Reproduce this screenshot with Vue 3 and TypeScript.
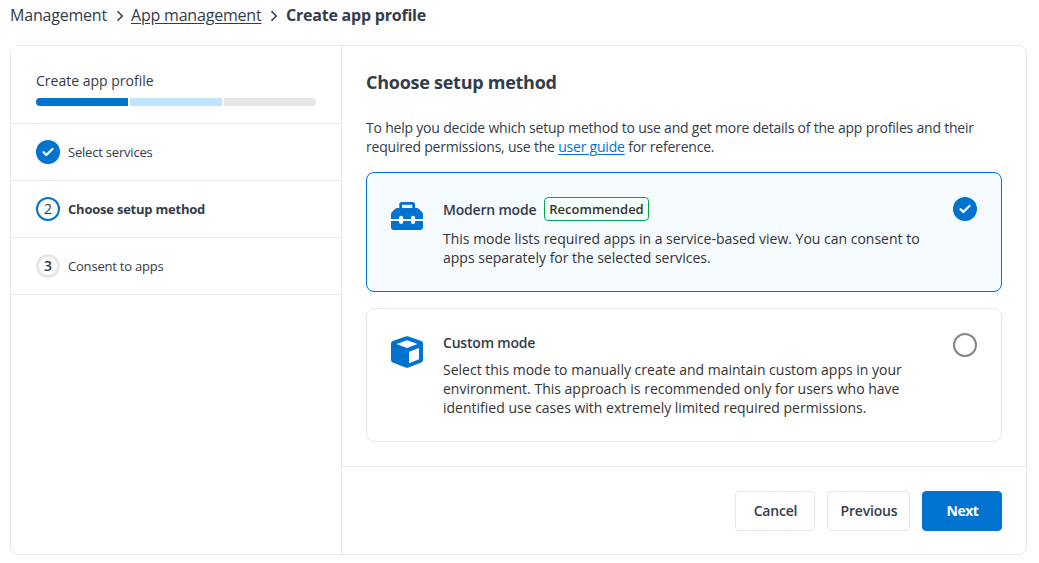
<script setup lang="ts">
import { computed, ref } from 'vue'

type Mode = 'modern' | 'custom'

interface Step {
  id: number
  label: string
}

const steps: Step[] = [
  { id: 1, label: 'Select services' },
  { id: 2, label: 'Choose setup method' },
  { id: 3, label: 'Consent to apps' },
]
const current = ref<number>(2)
const mode = ref<Mode>('modern')

const stepStates = computed(() =>
  steps.map((s) => ({
    ...s,
    state: s.id < current.value ? 'done' : s.id === current.value ? 'active' : 'todo',
  })),
)
</script>

<template>
  <div class="page">
    <nav class="breadcrumb">
      <span class="crumb c1">Management</span>
      <svg class="chev" width="8" height="12" viewBox="0 0 8 12"><path d="M1.500 1.200 6.200 6l-4.700 4.800" /></svg>
      <a class="crumb c2">App management</a>
      <svg class="chev second" width="8" height="12" viewBox="0 0 8 12"><path d="M1.500 1.200 6.200 6l-4.700 4.800" /></svg>
      <span class="crumb current">Create app profile</span>
    </nav>

    <div class="wizard">
      <aside class="sidebar">
        <div class="side-head">
          <div class="side-title">Create app profile</div>
          <div class="progress">
            <span v-for="s in stepStates" :key="s.id" class="segment" :class="s.state"></span>
          </div>
        </div>
        <div v-for="s in stepStates" :key="s.id" class="step" :class="s.state">
          <svg v-if="s.state === 'done'" class="tick" width="24" height="24" viewBox="0 0 24 24">
            <circle cx="12" cy="12" r="12" />
            <path d="m7.600 12.300 2.700 2.700 6.200-6" />
          </svg>
          <span v-else class="bullet">{{ s.id }}</span>
          <span class="step-label">{{ s.label }}</span>
        </div>
      </aside>

      <main class="main">
        <section class="content">
          <h1>Choose setup method</h1>
          <p class="intro">
            To help you decide which setup method to use and get more details of the app profiles and their<br />
            required permissions, use the <a>user guide</a> for reference.
          </p>

          <div class="card modern" :class="{ selected: mode === 'modern' }" @click="mode = 'modern'">
            <svg class="glyph" width="32" height="32" viewBox="0 0 32 32">
              <path
                fill-rule="evenodd"
                d="M8.300 8V4.500Q8.300 2 10.800 2h10.700Q24 2 24 4.500V8h1.500Q27 8 28 9l3 3q1 1 1 2.500V19h-7.800v-1.200a2.100 2.100 0 0 0-4.200 0V19h-7.800v-1.200a2.100 2.100 0 0 0-4.200 0V19H0v-4.500Q0 13 1 12l3-3q1-1 2.500-1zM11 8h10.300V4.700H11z"
              />
              <path d="M0 21h8v1a2.100 2.100 0 0 0 4.200 0v-1H20v1a2.100 2.100 0 0 0 4.200 0v-1H32v6q0 3-3 3H3q-3 0-3-3z" />
            </svg>
            <div class="text">
              <div class="name-row">
                <span class="name">Modern mode</span>
                <span class="tag">Recommended</span>
              </div>
              <p>
                This mode lists required apps in a service-based view. You can consent to<br />
                apps separately for the selected services.
              </p>
            </div>
            <svg v-if="mode === 'modern'" class="tick radio" width="24" height="24" viewBox="0 0 24 24">
              <circle cx="12" cy="12" r="12" />
              <path d="m7.600 12.300 2.700 2.700 6.200-6" />
            </svg>
            <span v-else class="ring radio"></span>
          </div>

          <div class="card custom" :class="{ selected: mode === 'custom' }" @click="mode = 'custom'">
            <svg class="glyph" width="32" height="32" viewBox="0 0 32 32">
              <path
                fill-rule="evenodd"
                d="M14.500.500Q16-.2 17.500.500L30.300 5.100Q32 5.800 32 7.600v16.500q0 1.800-1.700 2.500L17.500 31.500q-1.500.7-3 0L1.700 26.600Q0 25.900 0 24.100V7.600Q0 5.800 1.700 5.100zM5.500 8 16 12 26.500 8 16 4.200zM18 15.800v11.400l10-3.900V11.900z"
              />
            </svg>
            <div class="text">
              <div class="name-row">
                <span class="name">Custom mode</span>
              </div>
              <p>
                Select this mode to manually create and maintain custom apps in your<br />
                environment. This approach is recommended only for users who have<br />
                identified use cases with extremely limited required permissions.
              </p>
            </div>
            <svg v-if="mode === 'custom'" class="tick radio" width="24" height="24" viewBox="0 0 24 24">
              <circle cx="12" cy="12" r="12" />
              <path d="m7.600 12.300 2.700 2.700 6.200-6" />
            </svg>
            <span v-else class="ring radio"></span>
          </div>
        </section>

        <footer class="footer">
          <button class="btn cancel" type="button">Cancel</button>
          <button class="btn previous" type="button">Previous</button>
          <button class="btn primary" type="button">Next</button>
        </footer>
      </main>
    </div>
  </div>
</template>

<style>
body {
  background: #fff;
  overflow: hidden;
}
</style>

<style scoped>
* {
  box-sizing: border-box;
}
.page {
  width: 1039px;
  height: 563px;
  padding: 4px 12px 0 10px;
  font-family: 'Open Sans', 'Noto Sans', sans-serif;
  font-size: 14px;
  color: #333c49;
}
.breadcrumb {
  display: flex;
  align-items: center;
  height: 22px;
  font-size: 16px;
  line-height: 22px;
  white-space: nowrap;
}
.crumb {
  letter-spacing: -0.2px;
}
.chev {
  flex: none;
  margin: 2px 7px 0 9px;
  fill: none;
  stroke: #333c49;
  stroke-width: 1.5;
}
.chev.second {
  margin-right: 7.6px;
}
.c2 {
  text-decoration: underline;
  text-underline-offset: 2px;
}
.current {
  font-weight: 700;
  letter-spacing: -0.22px;
}
.wizard {
  display: flex;
  width: 1017px;
  height: 510px;
  margin-top: 19px;
  border: 1px solid #e6e7e9;
  border-radius: 8px;
}
.sidebar {
  flex: none;
  width: 331px;
  border-right: 1px solid #e6e7e9;
}
.side-head {
  height: 78px;
  padding: 25px 25px 0;
  border-bottom: 1px solid #e6e7e9;
  background: #fff;
}
.side-title {
  height: 19px;
  line-height: 19px;
}
.progress {
  display: flex;
  gap: 2px;
  margin-top: 8px;
}
.segment {
  flex: 1;
  height: 8px;
  background: #e6e7e9;
}
.segment.done {
  background: #0073d1;
}
.segment.active {
  background: #c2e3ff;
}
.segment:first-child {
  border-radius: 4px 0 0 4px;
}
.segment:last-child {
  border-radius: 0 4px 4px 0;
}
.step {
  display: flex;
  align-items: center;
  gap: 8px;
  height: 57px;
  padding-left: 25px;
  border-bottom: 1px solid #e6e7e9;
  font-size: 13px;
}
.step-label {
  letter-spacing: -0.2px;
}
.step.active .step-label {
  font-weight: 700;
  letter-spacing: -0.22px;
}
.bullet {
  display: flex;
  align-items: center;
  justify-content: center;
  width: 24px;
  height: 24px;
  border: 3px solid #e6e7e9;
  border-radius: 50%;
  font-size: 14px;
  line-height: 18px;
  font-weight: 600;
}
.active .bullet {
  border: 2px solid #0073d1;
  font-weight: 500;
}
.tick {
  flex: none;
  fill: #0073d1;
}
.tick path {
  fill: none;
  stroke: #fff;
  stroke-width: 2.3;
  stroke-linecap: round;
  stroke-linejoin: round;
}
.main {
  flex: 1;
  display: flex;
  flex-direction: column;
}
.content {
  height: 420px;
  padding: 24px 24px 0;
}
h1 {
  margin: 0;
  font-size: 18px;
  line-height: 25px;
  font-weight: 700;
  letter-spacing: -0.26px;
}
.intro {
  margin: 23px 0 16px;
  line-height: 19px;
  letter-spacing: -0.207px;
  white-space: nowrap;
}
.intro a {
  color: #0073d1;
  text-decoration: underline;
  text-underline-offset: 2px;
}
.card {
  display: flex;
  width: 636px;
  padding: 0 24px;
  border: 1px solid #e6e7e9;
  border-radius: 8px;
}
.card.selected {
  border-color: #0073d1;
  background: #f5faff;
}
.modern {
  height: 120px;
  padding-top: 24px;
}
.custom {
  height: 134px;
  margin-top: 16px;
  padding-top: 24px;
}
.glyph {
  flex: none;
  margin-top: 3px;
  fill: #0073d1;
}
.text {
  flex: 1;
  margin-left: 20px;
  color: #333;
}
.name-row {
  display: flex;
  align-items: center;
  gap: 8px;
  height: 24px;
}
.custom .name-row {
  height: 19px;
}
.name {
  color: #333c49;
  font-weight: 600;
  line-height: 19px;
  letter-spacing: -0.2px;
}
.tag {
  height: 24px;
  padding: 0 4px;
  border: 1px solid #00a651;
  border-radius: 4px;
  background: #f5fff9;
  font-size: 13px;
  font-weight: 600;
  line-height: 22px;
}
.text p {
  margin: 8px 0 0;
  line-height: 19px;
  white-space: nowrap;
}
.ring {
  width: 24px;
  height: 24px;
  border: 2px solid #858585;
  border-radius: 50%;
}
.radio {
  flex: none;
}
.footer {
  flex: 1;
  display: flex;
  justify-content: flex-end;
  gap: 12px;
  padding: 24px 24px 0 0;
  border-top: 1px solid #e6e7e9;
}
.btn {
  width: 80px;
  height: 40px;
  padding: 0 0 2px 1px;
  border: 1px solid #e6e7e9;
  border-radius: 4px;
  background: #fff;
  color: #333c49;
  font: 600 14px/19px 'Open Sans', 'Noto Sans', sans-serif;
  letter-spacing: -0.2px;
}
.previous {
  width: 83px;
}
.primary {
  border-color: #0073d1;
  background: #0073d1;
  color: #fff;
  font-weight: 700;
  letter-spacing: -0.5px;
}
</style>
